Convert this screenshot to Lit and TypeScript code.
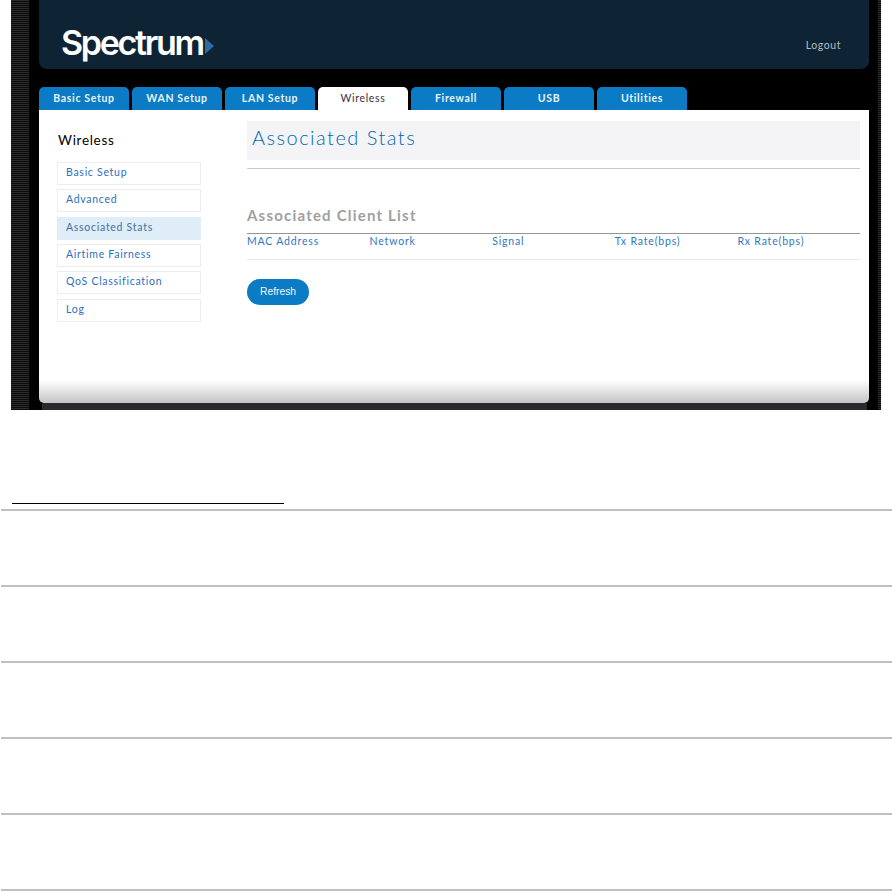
import { LitElement, html, css } from "lit";
import { customElement } from "lit/decorators.js";

const TABS = ["Basic Setup", "WAN Setup", "LAN Setup", "Wireless", "Firewall", "USB", "Utilities"];
const SIDE = ["Basic Setup", "Advanced", "Associated Stats", "Airtime Fairness", "QoS Classification", "Log"];
const COLS = ["MAC Address", "Network", "Signal", "Tx Rate(bps)", "Rx Rate(bps)"];

@customElement("app-root")
export class AppRoot extends LitElement {
  static styles = css`
    :host { display: block; width: 892px; height: 891px; background: #fff; overflow: hidden; font-family: "Lato", "Noto Sans", sans-serif; }
    * { box-sizing: border-box; }
    .frame { margin-left: 11px; width: 870px; height: 410px; padding: 0 12px 0 28px; background:
      linear-gradient(#2a2a2c, #2a2a2c) left 31px bottom / 825px 7px no-repeat,
      repeating-linear-gradient(180deg, #2c2c2c 0 1px, #0c0c0c 1px 2px) left top / 18px 100% no-repeat,
      repeating-linear-gradient(180deg, #2c2c2c 0 1px, #0c0c0c 1px 2px) right top / 3px 100% no-repeat,
      #000; }
    .panel { width: 830px; }
    .head { height: 69px; background: #0e2435; border-radius: 0 0 8px 8px; display: flex; justify-content: space-between; align-items: flex-start; padding: 23px 28px 0 22px; }
    .logo { display: flex; align-items: flex-start; color: #fff; font: 600 34px/40px "Inter", sans-serif; letter-spacing: -2.3px; }
    .logo svg { margin: 15px 0 0 2px; }
    .logout { color: #b4bcc3; font-size: 10.5px; line-height: 14px; letter-spacing: .55px; margin-top: 15px; }
    .tabs { display: flex; gap: 3px; height: 41px; padding-top: 18px; }
    .tab { width: 90px; height: 23px; background: #0a7bc4; color: #e8f2f8; border-radius: 5px 5px 0 0; font-size: 10.5px; font-weight: 700; letter-spacing: .65px; line-height: 23px; text-align: center; }
    .tab.on { background: #fff; color: #33333f; font-weight: 400; }
    .body { height: 293px; background: linear-gradient(180deg, #fff 0, #fff 270px, #c4c4c8 293px); border-radius: 0 0 5px 5px; display: flex; padding: 11px 9px 0 18px; }
    .side { width: 144px; margin-right: 46px; }
    .side h3 { margin: 11px 0 11px 1px; height: 19px; font-size: 13.5px; line-height: 17px; font-weight: 400; letter-spacing: .7px; color: #000; }
    .nav { display: flex; flex-direction: column; gap: 4.35px; }
    .item { height: 23px; border: 1px solid #ededed; padding-left: 8px; font-size: 10.5px; line-height: 18px; letter-spacing: .72px; color: #2c6fbd; }
    .item.on { background: #deedf8; border-color: #deedf8; color: #44709e; }
    .main { width: 613px; }
    .title { height: 39px; background: #f4f4f6; padding-left: 5px; color: #0067b5; font-size: 20px; line-height: 33px; letter-spacing: 1.48px; font-weight: 300; margin: 0; }
    .rule { height: 1px; background: #c9c9c9; margin-top: 8px; }
    .sub { margin: 38px 0 0; height: 26px; font-size: 15px; line-height: 17px; font-weight: 700; letter-spacing: 1.2px; color: #a0a0a0; }
    .cols { display: grid; grid-template-columns: repeat(5, 122.6px); border-top: 1px solid #969696; border-bottom: 1px solid #e8e8e8; height: 27px; }
    .cols span { font-size: 10.5px; line-height: 15px; letter-spacing: .82px; color: #2c78c4; }
    .btn { display: block; margin-top: 19px; width: 62px; height: 26px; padding: 0; border: 0; border-radius: 13px; background: #0a7bc4; color: #f2f8fc; font: 400 10.3px/26px "Liberation Sans", sans-serif; text-align: center; }
    .lower { padding-top: 93px; }
    .mark { margin-left: 12px; width: 272px; height: 1px; background: #000; }
    .rows { margin: 5px 0 0 1px; }
    .row { height: 76px; border-top: 2px solid #c0c0c0; }
  `;

  render() {
    return html`
      <div class="frame">
        <div class="panel">
          <div class="head">
            <div class="logo">Spectrum<svg width="9" height="16" viewBox="0 0 9 16"><path d="M0 0 L9 8 L0 16 Z" fill="#2a6ca3"/></svg></div>
            <div class="logout">Logout</div>
          </div>
          <div class="tabs">
            ${TABS.map((t) => html`<div class="tab ${t === "Wireless" ? "on" : ""}">${t}</div>`)}
          </div>
          <div class="body">
            <div class="side">
              <h3>Wireless</h3>
              <div class="nav">
                ${SIDE.map((s) => html`<div class="item ${s === "Associated Stats" ? "on" : ""}">${s}</div>`)}
              </div>
            </div>
            <div class="main">
              <h1 class="title">Associated Stats</h1>
              <div class="rule"></div>
              <h2 class="sub">Associated Client List</h2>
              <div class="cols">${COLS.map((c) => html`<span>${c}</span>`)}</div>
              <button class="btn">Refresh</button>
            </div>
          </div>
        </div>
      </div>
      <div class="lower">
        <div class="mark"></div>
        <div class="rows">
          ${[0, 1, 2, 3, 4, 5].map(() => html`<div class="row"></div>`)}
        </div>
      </div>
    `;
  }
}
